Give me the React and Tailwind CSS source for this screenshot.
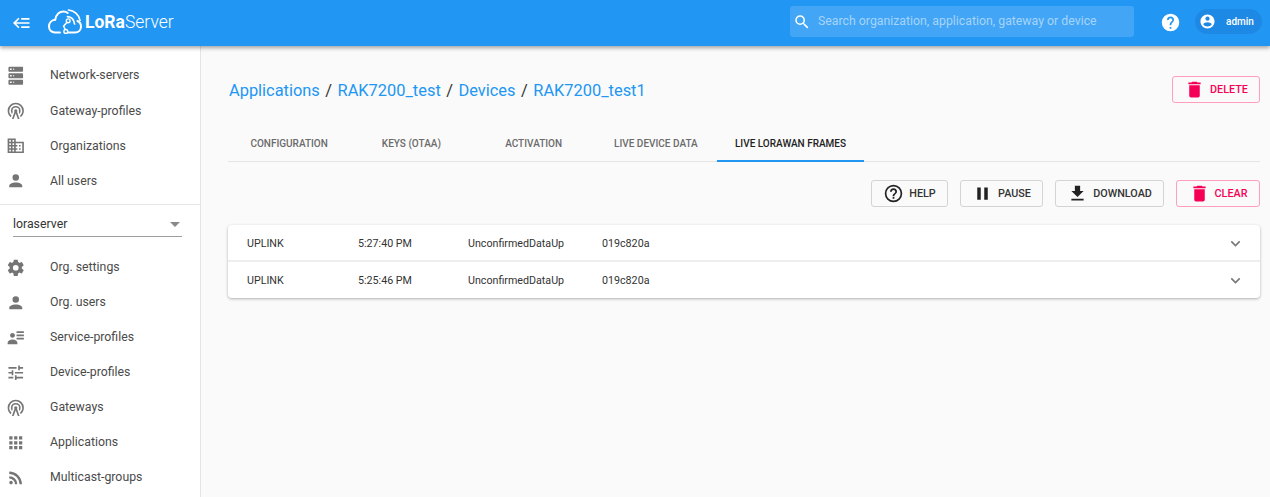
const P = {
  server: "M4,1H20A1,1 0 0,1 21,2V6A1,1 0 0,1 20,7H4A1,1 0 0,1 3,6V2A1,1 0 0,1 4,1M4,9H20A1,1 0 0,1 21,10V14A1,1 0 0,1 20,15H4A1,1 0 0,1 3,14V10A1,1 0 0,1 4,9M4,17H20A1,1 0 0,1 21,18V22A1,1 0 0,1 20,23H4A1,1 0 0,1 3,22V18A1,1 0 0,1 4,17M9,5H10V3H9V5M9,13H10V11H9V13M9,21H10V19H9V21M5,3V5H7V3H5M5,11V13H7V11H5M5,19V21H7V19H5Z",
  tower: "M12,10A2,2 0 0,1 14,12C14,12.5 13.82,12.94 13.53,13.29L16.7,22H14.57L12,14.93L9.43,22H7.3L10.47,13.29C10.18,12.94 10,12.5 10,12A2,2 0 0,1 12,10M12,8A4,4 0 0,0 8,12C8,12.5 8.1,13 8.28,13.46L7.4,15.86C6.53,14.81 6,13.47 6,12A6,6 0 0,1 12,6A6,6 0 0,1 18,12C18,13.47 17.47,14.81 16.6,15.86L15.72,13.46C15.9,13 16,12.5 16,12A4,4 0 0,0 12,8M12,4A8,8 0 0,0 4,12C4,14.36 5,16.5 6.64,17.94L5.92,19.94C3.54,18.11 2,15.23 2,12A10,10 0 0,1 12,2A10,10 0 0,1 22,12C22,15.23 20.46,18.11 18.08,19.94L17.36,17.94C19,16.5 20,14.36 20,12A8,8 0 0,0 12,4Z",
  domain: "M12 7V3H2v18h20V7H12zM6 19H4v-2h2v2zm0-4H4v-2h2v2zm0-4H4V9h2v2zm0-4H4V5h2v2zm4 12H8v-2h2v2zm0-4H8v-2h2v2zm0-4H8V9h2v2zm0-4H8V5h2v2zm10 12h-8v-2h2v-2h-2v-2h2v-2h-2V9h8v10zm-2-8h-2v2h2v-2zm0 4h-2v2h2v-2z",
  account: "M12,4A4,4 0 0,1 16,8A4,4 0 0,1 12,12A4,4 0 0,1 8,8A4,4 0 0,1 12,4M12,14C16.42,14 20,15.79 20,18V20H4V18C4,15.79 7.58,14 12,14Z",
  settings: "M12,15.5A3.5,3.5 0 0,1 8.5,12A3.5,3.5 0 0,1 12,8.5A3.5,3.5 0 0,1 15.5,12A3.5,3.5 0 0,1 12,15.5M19.43,12.97C19.47,12.65 19.5,12.33 19.5,12C19.5,11.67 19.47,11.34 19.43,11L21.54,9.37C21.73,9.22 21.78,8.95 21.66,8.73L19.66,5.27C19.54,5.05 19.27,4.96 19.05,5.05L16.56,6.05C16.04,5.66 15.5,5.32 14.87,5.07L14.5,2.42C14.46,2.18 14.25,2 14,2H10C9.75,2 9.54,2.18 9.5,2.42L9.13,5.07C8.5,5.32 7.96,5.66 7.44,6.05L4.95,5.05C4.73,4.96 4.46,5.05 4.34,5.27L2.34,8.73C2.21,8.95 2.27,9.22 2.46,9.37L4.57,11C4.53,11.34 4.5,11.67 4.5,12C4.5,12.33 4.53,12.65 4.57,12.97L2.46,14.63C2.27,14.78 2.21,15.05 2.34,15.27L4.34,18.73C4.46,18.95 4.73,19.03 4.95,18.95L7.44,17.94C7.96,18.34 8.5,18.68 9.13,18.93L9.5,21.58C9.54,21.82 9.75,22 10,22H14C14.25,22 14.46,21.82 14.5,21.58L14.87,18.93C15.5,18.67 16.04,18.34 16.56,17.94L19.05,18.95C19.27,19.03 19.54,18.95 19.66,18.73L21.66,15.27C21.78,15.05 21.73,14.78 21.54,14.63L19.43,12.97Z",
  details: "M11,9C11,10.66 9.66,12 8,12C6.34,12 5,10.66 5,9C5,7.34 6.34,6 8,6C9.66,6 11,7.34 11,9M14,20H2V18C2,15.79 4.69,14 8,14C11.31,14 14,15.79 14,18M22,12V14H13V12M22,8V10H13V8M22,4V6H13V4Z",
  tune: "M3 17v2h6v-2H3zM3 5v2h10V5H3zm10 16v-2h8v-2h-8v-2h-2v6h2zM7 9v2H3v2h4v2h2V9H7zm14 4v-2H11v2h10zm-6-4h2V7h4V5h-4V3h-2v6z",
  apps: "M4 8h4V4H4v4zm6 12h4v-4h-4v4zm-6 0h4v-4H4v4zm0-6h4v-4H4v4zm6 0h4v-4h-4v4zm6-10v4h4V4h-4zm-6 4h4V4h-4v4zm6 6h4v-4h-4v4zm0 6h4v-4h-4v4z",
  rss: "M6.18 15.64a2.18 2.18 0 0 1 2.18 2.18C8.36 19 7.38 20 6.18 20C5 20 4 19 4 17.82a2.18 2.18 0 0 1 2.18-2.18M4 4.44A15.56 15.56 0 0 1 19.56 20h-2.83A12.73 12.73 0 0 0 4 7.27V4.44m0 5.66a9.9 9.9 0 0 1 9.9 9.9h-2.83A7.07 7.07 0 0 0 4 12.93V10.1z",
  del: "M19,4H15.5L14.5,3H9.5L8.5,4H5V6H19M6,19A2,2 0 0,0 8,21H16A2,2 0 0,0 18,19V7H6V19Z",
  helpO: "M11,18H13V16H11V18M12,2A10,10 0 0,0 2,12A10,10 0 0,0 12,22A10,10 0 0,0 22,12A10,10 0 0,0 12,2M12,20C7.59,20 4,16.41 4,12C4,7.59 7.59,4 12,4C16.41,4 20,7.59 20,12C20,16.41 16.41,20 12,20M12,6A4,4 0 0,0 8,10H10A2,2 0 0,1 12,8A2,2 0 0,1 14,10C14,12 11,11.75 11,15H13C13,12.75 16,12.5 16,10A4,4 0 0,0 12,6Z",
  help: "M15.07,11.25L14.17,12.17C13.45,12.89 13,13.5 13,15H11V14.5C11,13.39 11.45,12.39 12.17,11.67L13.41,10.41C13.78,10.05 14,9.55 14,9C14,7.89 13.1,7 12,7A2,2 0 0,0 10,9H8A4,4 0 0,1 12,5A4,4 0 0,1 16,9C16,9.88 15.64,10.67 15.07,11.25M13,19H11V17H13M12,2A10,10 0 0,0 2,12A10,10 0 0,0 12,22A10,10 0 0,0 22,12C22,6.47 17.5,2 12,2Z",
  pause: "M14,19H18V5H14M6,19H10V5H6V19Z",
  download: "M5,20H19V18H5M19,9H15V3H9V9H5L12,16L19,9Z",
  accountC: "M12,19.2C9.5,19.2 7.29,17.92 6,16C6.03,14 10,12.9 12,12.9C14,12.9 17.97,14 18,16C16.71,17.92 14.5,19.2 12,19.2M12,5A3,3 0 0,1 15,8A3,3 0 0,1 12,11A3,3 0 0,1 9,8A3,3 0 0,1 12,5M12,2A10,10 0 0,0 2,12A10,10 0 0,0 12,22A10,10 0 0,0 22,12C22,6.47 17.5,2 12,2Z",
  magnify: "M9.5,3A6.5,6.5 0 0,1 16,9.5C16,11.11 15.41,12.59 14.44,13.73L14.71,14H15.5L20.5,19L19,20.5L14,15.5V14.71L13.73,14.44C12.59,15.41 11.11,16 9.5,16A6.5,6.5 0 0,1 3,9.5A6.5,6.5 0 0,1 9.5,3M9.5,5C7,5 5,7 5,9.5C5,12 7,14 9.5,14C12,14 14,12 14,9.5C14,7 12,5 9.5,5Z",
  chevron: "M7.41 8.59L12 13.17l4.59-4.58L18 10l-6 6-6-6z",
  back: "M5,13L9,17L7.6,18.42L1.18,12L7.6,5.58L9,7L5,11H21V13H5M21,6V8H11V6H21M21,16V18H11V16H21Z",
};

function Icon({ d, className }) {
  return (
    <svg viewBox="0 0 24 24" fill="currentColor" className={className}>
      <path d={d} />
    </svg>
  );
}

function Logo() {
  return (
    <svg viewBox="0 0 34 27" fill="none" stroke="currentColor" strokeLinecap="round" className="w-[34px] h-[27px] text-white">
      <path strokeWidth="2" d="M12 23.5H7C3.4 23.5 1 20.8 1 17.4C1 14 3.6 11.2 7.2 10.8C8.2 6 11.4 2.6 15.6 2.6C17.2 2.6 18.6 3.1 19.8 4" />
      <path strokeWidth="2" d="M20 23.5H27C30.6 23.5 33 20.8 33 17.5C33 15 31.6 13 29.4 12" />
      <path strokeWidth="1.5" d="M17 20L15.6 17.2L18.8 13.4" />
      <circle cx="17.8" cy="22.4" r="1.9" strokeWidth="1.4" />
      <circle cx="20.2" cy="11.8" r="1.9" strokeWidth="1.4" />
      <path strokeWidth="1.7" d="M19.5 7.6C23 7.8 26 10.6 26.6 15" />
      <path strokeWidth="1.7" d="M20.5 1C26 1.4 31 5.6 32 11.4" />
    </svg>
  );
}

function NavItem({ icon, label, tight }) {
  return (
    <div className={"flex items-center pl-[6.25px] text-[12.3px] text-[#4a4a4a] " + (tight ? "h-[35px]" : "h-[35.2px]")}>
      <Icon d={icon} className="w-[19.5px] h-[19.5px] text-[#757575] shrink-0" />
      <span className="ml-[24.25px]">{label}</span>
    </div>
  );
}

function ActionButton({ icon, label, width, danger }) {
  return (
    <button
      className={
        "flex items-center justify-center h-[27px] rounded-[3px] border text-[10.8px] font-medium " +
        (danger ? "border-[#ff9ebd] text-[#f50057]" : "border-[#d4d4d4] text-[#333333]")
      }
      style={{ width }}
    >
      <Icon d={icon} className={"w-[21px] h-[21px] mr-[5px] " + (danger ? "text-[#f50057]" : "text-[#222222]")} />
      <span className="pt-[2px]">{label}</span>
    </button>
  );
}

function Tab({ label, active }) {
  return (
    <div
      className={
        "flex items-center justify-center h-[37px] pt-[1px] text-[10px] font-medium border-b-2 -mb-px " +
        (active ? "w-[147px] text-[#222222] border-[#2196f3]" : "w-[122.25px] text-[#6b6b6b] border-transparent")
      }
    >
      {label}
    </div>
  );
}

function Crumb({ children }) {
  return <span className="text-[#2196f3]">{children}</span>;
}

function Sep() {
  return <span className="mx-[5.5px] text-[#333333]">/</span>;
}

function FrameRow({ time, top }) {
  return (
    <div className={"flex items-center h-[36.5px] pl-[19px] pr-[15px] text-[10.7px] text-[#333333] " + (top ? "pt-[3px] border-b-2 border-[#eeeeee]" : "pt-[2px]")}>
      <span className="w-[111px]">UPLINK</span>
      <span className="w-[110px]">{time}</span>
      <span className="w-[134px]">UnconfirmedDataUp</span>
      <span>019c820a</span>
      <Icon d={P.chevron} className="w-[19px] h-[19px] ml-auto text-[#757575]" />
    </div>
  );
}

export default function App() {
  return (
    <div className="w-[1270px] h-[497px] overflow-hidden flex flex-col bg-[#fafafa] font-['Roboto',sans-serif]">
      <header className="relative z-10 h-[46px] shrink-0 bg-[#2196f3] flex items-center shadow-[0_2px_4px_rgba(0,0,0,0.35)] text-white">
        <Icon d={P.back} className="w-[20px] h-[20px] ml-[12px]" />
        <div className="ml-[16px] -mt-[2px]"><Logo /></div>
        <span className="ml-[3px] text-[17.5px] leading-none -mt-[1px]"><span className="font-bold">LoRa</span><span className="font-light">Server</span></span>
        <div className="ml-auto flex items-center w-[344px] h-[31px] rounded-[3px] bg-[#42a5f5] -mt-[3px]">
          <Icon d={P.magnify} className="w-[18px] h-[18px] ml-[3px]" />
          <span className="ml-[7px] text-[12.3px] text-[#a6d4fa]">Search organization, application, gateway or device</span>
        </div>
        <Icon d={P.help} className="w-[21px] h-[21px] ml-[26px] -mt-[1px]" />
        <div className="ml-[14px] mr-[8px] flex items-center w-[67px] h-[25px] rounded-full bg-[#1e88e5] -mt-[3px]">
          <Icon d={P.accountC} className="w-[17px] h-[17px] ml-[4px]" />
          <span className="ml-[10px] text-[10px] font-medium">admin</span>
        </div>
      </header>
      <div className="flex flex-1 min-h-0">
        <aside className="w-[201px] shrink-0 bg-white border-r border-[#e4e4e4] pt-[12px] overflow-hidden">
          <NavItem icon={P.server} label="Network-servers" />
          <NavItem icon={P.tower} label="Gateway-profiles" />
          <NavItem icon={P.domain} label="Organizations" />
          <NavItem icon={P.account} label="All users" />
          <div className="mt-[5.5px] border-t border-[#e8e8e8]" />
          <div className="mx-[13px] mr-[18px] flex items-center justify-between h-[31px] pt-[6px] mt-[1px] border-b border-[#9e9e9e] text-[12.3px] text-[#333333]">
            <span>loraserver</span>
            <span className="mr-[2px] w-0 h-0 border-x-[5px] border-x-transparent border-t-[5px] border-t-[#8a8a8a]" />
          </div>
          <div className="h-[12.5px]" />
          <NavItem tight icon={P.settings} label="Org. settings" />
          <NavItem tight icon={P.account} label="Org. users" />
          <NavItem tight icon={P.details} label="Service-profiles" />
          <NavItem tight icon={P.tune} label="Device-profiles" />
          <NavItem tight icon={P.tower} label="Gateways" />
          <NavItem tight icon={P.apps} label="Applications" />
          <NavItem tight icon={P.rss} label="Multicast-groups" />
        </aside>
        <main className="flex-1 min-w-0 pl-[27px] pr-[10px] pt-[30px]">
          <div className="flex items-center justify-between h-[27px]">
            <div className="text-[16.4px] pl-[1px] pt-[3px]">
              <Crumb>Applications</Crumb><Sep /><Crumb>RAK7200_test</Crumb><Sep /><Crumb>Devices</Crumb><Sep /><Crumb>RAK7200_test1</Crumb>
            </div>
            <ActionButton icon={P.del} label="DELETE" width={88} danger />
          </div>
          <div className="mt-[22px] flex border-b border-[#e4e4e4]">
            <Tab label="CONFIGURATION" />
            <Tab label="KEYS (OTAA)" />
            <Tab label="ACTIVATION" />
            <Tab label="LIVE DEVICE DATA" />
            <Tab label="LIVE LORAWAN FRAMES" active />
          </div>
          <div className="mt-[18px] flex justify-end gap-[12px]">
            <ActionButton icon={P.helpO} label="HELP" width={77} />
            <ActionButton icon={P.pause} label="PAUSE" width={83} />
            <ActionButton icon={P.download} label="DOWNLOAD" width={109} />
            <ActionButton icon={P.del} label="CLEAR" width={84} danger />
          </div>
          <div className="mt-[18px] bg-white rounded-[4px] shadow-[0_1px_3px_rgba(0,0,0,0.3)]">
            <FrameRow time="5:27:40 PM" top />
            <FrameRow time="5:25:46 PM" />
          </div>
        </main>
      </div>
    </div>
  );
}
